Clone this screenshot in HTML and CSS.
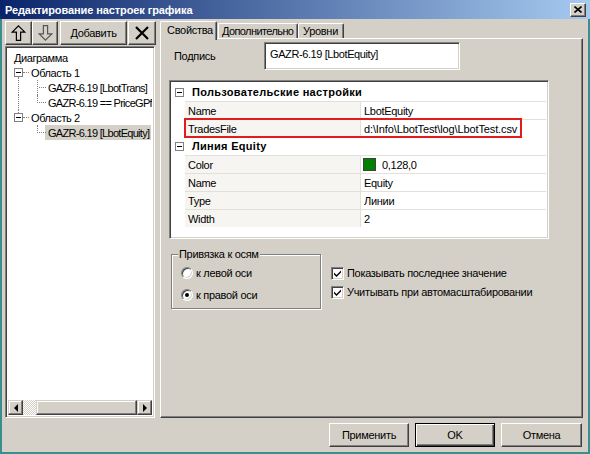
FILE: index.html
```html
<!DOCTYPE html>
<html lang="ru">
<head>
<meta charset="utf-8">
<title>Редактирование настроек графика</title>
<link rel="stylesheet" href="styles.css">
</head>
<body>
<div class="titlebar">
  <span class="title">Редактирование настроек графика</span>
  <button class="close" type="button"><svg width="8" height="7" viewBox="0 0 8 7"><path d="M0.5 0.5 L7.5 6.5 M7.5 0.5 L0.5 6.5" stroke="#000" stroke-width="1.6" fill="none"/></svg></button>
</div>
<div class="frame">
  <div class="main">
    <div class="left">
      <div class="toolbar">
        <button class="btn tb-up" type="button"><svg width="15" height="16" viewBox="0 0 15 16"><path d="M7.5 0.8 L13.8 7.2 L9.6 7.2 L9.6 15.3 L5.4 15.3 L5.4 7.2 L1.2 7.2 Z" fill="#d4d0c8" stroke="#000" stroke-width="1.2"/></svg></button>
        <button class="btn tb-down" type="button"><svg width="15" height="16" viewBox="0 0 15 16"><path d="M7.5 15.2 L13.8 8.8 L9.6 8.8 L9.6 0.7 L5.4 0.7 L5.4 8.8 L1.2 8.8 Z" fill="#d4d0c8" stroke="#555" stroke-width="1.2"/></svg></button>
        <button class="btn tb-add" type="button">Добавить</button>
        <button class="btn tb-del" type="button"><svg width="14" height="14" viewBox="0 0 14 14"><path d="M1 1 L13 13 M13 1 L1 13" stroke="#000" stroke-width="2.2" fill="none"/></svg></button>
      </div>
      <div class="tree sunken">
        <div class="tree-items">
          <div class="trow root"><span class="tt">Диаграмма</span></div>
          <div class="trow lvl1"><span class="pm has-next"></span><span class="dash"></span><span class="tt">Область 1</span></div>
          <div class="trow lvl2"><span class="vl on"></span><span class="conn"></span><span class="tt">GAZR-6.19 [LbotTrans]</span></div>
          <div class="trow lvl2"><span class="vl on"></span><span class="conn last"></span><span class="tt">GAZR-6.19 == PriceGPf</span></div>
          <div class="trow lvl1"><span class="pm has-prev"></span><span class="dash"></span><span class="tt">Область 2</span></div>
          <div class="trow lvl2"><span class="vl"></span><span class="conn last"></span><span class="tt sel">GAZR-6.19 [LbotEquity]</span></div>
        </div>
        <div class="hscroll">
          <span class="sb-btn"><i class="tri-left"></i></span>
          <span class="sb-track"></span>
          <span class="sb-thumb"></span>
          <span class="sb-btn"><i class="tri-right"></i></span>
        </div>
      </div>
    </div>
    <div class="tabs">
      <div class="tabstrip">
        <div class="tab active">Свойства</div>
        <div class="tab t2">Дополнительно</div>
        <div class="tab t3">Уровни</div>
      </div>
      <div class="panel">
        <div class="caption-row">
          <span class="lbl">Подпись</span>
          <div class="input sunken">GAZR-6.19 [LbotEquity]</div>
        </div>
        <div class="grid sunken">
          <div class="cat"><span class="gpm"></span><b>Пользовательские настройки</b></div>
          <div class="prop"><span class="pn">Name</span><span class="pv">LbotEquity</span></div>
          <div class="prop marked"><span class="pn">TradesFile</span><span class="pv path">d:\Info\LbotTest\log\LbotTest.csv</span><span class="mark"></span></div>
          <div class="cat"><span class="gpm"></span><b>Линия Equity</b></div>
          <div class="prop"><span class="pn">Color</span><span class="pv"><i class="swatch"></i>0,128,0</span></div>
          <div class="prop"><span class="pn">Name</span><span class="pv">Equity</span></div>
          <div class="prop"><span class="pn">Type</span><span class="pv">Линии</span></div>
          <div class="prop"><span class="pn">Width</span><span class="pv">2</span></div>
        </div>
        <div class="options">
          <fieldset class="group">
            <legend>Привязка к осям</legend>
            <label class="ropt"><span class="radio"></span>к левой оси</label>
            <label class="ropt"><span class="radio checked"></span>к правой оси</label>
          </fieldset>
          <div class="checks">
            <label class="copt"><span class="cbox"><svg width="9" height="9" viewBox="0 0 9 9"><path d="M1 3.5 L3.5 6 L8 1.5 L8 3.5 L3.5 8 L1 5.5 Z" fill="#000"/></svg></span>Показывать последнее значение</label>
            <label class="copt"><span class="cbox"><svg width="9" height="9" viewBox="0 0 9 9"><path d="M1 3.5 L3.5 6 L8 1.5 L8 3.5 L3.5 8 L1 5.5 Z" fill="#000"/></svg></span>Учитывать при автомасштабировании</label>
          </div>
        </div>
      </div>
    </div>
  </div>
  <div class="footer">
    <button class="btn fbtn" type="button">Применить</button>
    <button class="btn fbtn default" type="button">OK</button>
    <button class="btn fbtn" type="button">Отмена</button>
  </div>
</div>
</body>
</html>
```

FILE: styles.css
```css
* { box-sizing: border-box; }
html, body { margin: 0; padding: 0; }
body {
  width: 590px;
  height: 454px;
  overflow: hidden;
  background: #3a8e8e;
  font-family: "Liberation Sans", Arial, sans-serif;
  font-size: 11px;
  letter-spacing: -0.3px;
  color: #000;
  display: flex;
  flex-direction: column;
}

/* title bar */
.titlebar {
  height: 19px;
  flex: none;
  display: flex;
  align-items: center;
  padding: 0 4px 0 5px;
  background: linear-gradient(to right, #0a246a, #a6caf0);
  color: #fff;
  font-weight: bold;
  letter-spacing: -0.1px;
}
.close {
  margin-left: auto;
  width: 16px;
  height: 14px;
  padding: 0;
  display: flex;
  align-items: center;
  justify-content: center;
  background: #d4d0c8;
  border: 1px solid;
  border-color: #fff #404040 #404040 #fff;
  box-shadow: inset -1px -1px #808080;
}

/* window frame */
.frame {
  flex: 1;
  background: #d4d0c8;
  border: 2px solid #3a8e8e;
  border-top: 0;
  padding: 2px 5px 5px 3px;
  display: flex;
  flex-direction: column;
}
.main {
  height: 397px;
  display: flex;
  gap: 4px;
}

/* generic 3D */
.btn {
  font: inherit;
  letter-spacing: inherit;
  color: #000;
  background: #d4d0c8;
  border: 1px solid;
  border-color: #fff #404040 #404040 #fff;
  box-shadow: inset -1px -1px #808080, inset 1px 1px #d4d0c8;
  padding: 0;
  display: flex;
  align-items: center;
  justify-content: center;
}
.sunken {
  background: #fff;
  border: 1px solid;
  border-color: #808080 #fff #fff #808080;
  box-shadow: inset 1px 1px #404040, inset -1px -1px #d4d0c8;
}

/* left pane */
.left {
  width: 151px;
  display: flex;
  flex-direction: column;
  gap: 1px;
}
.toolbar {
  height: 24px;
  display: flex;
}
.tb-up { width: 27px; }
.tb-down { width: 26px; }
.tb-add { width: 67px; margin-left: 2px; }
.tb-del { width: 28px; margin-left: 1px; }

.tree {
  flex: 1;
  width: 150px;
  display: flex;
  flex-direction: column;
  padding: 2px;
  overflow: hidden;
}
.tree-items {
  flex: 1;
  padding-top: 1px;
  overflow: hidden;
  white-space: nowrap;
  letter-spacing: -0.4px;
}
.trow {
  height: 15px;
  display: flex;
  align-items: center;
}
.trow.root { padding-left: 6px; }
.trow.lvl1 { padding-left: 6px; }
.trow.lvl2 { padding-left: 10px; align-items: stretch; letter-spacing: -0.7px; }
.pm {
  position: relative;
  width: 9px;
  height: 9px;
  border: 1px solid #808080;
  background: #fff;
  flex: none;
}
.pm::before {
  content: "";
  position: absolute;
  left: 1px;
  top: 3px;
  width: 5px;
  height: 1px;
  background: #000;
}
.pm.has-next::after {
  content: "";
  position: absolute;
  left: 3px;
  top: 8px;
  height: 4px;
  border-left: 1px dotted #808080;
}
.pm.has-prev::after {
  content: "";
  position: absolute;
  left: 3px;
  top: -4px;
  height: 3px;
  border-left: 1px dotted #808080;
}
.dash {
  width: 6px;
  border-top: 1px dotted #808080;
  margin-right: 2px;
}
.vl { width: 19px; flex: none; }
.vl.on { border-left: 1px dotted #808080; }
.conn {
  position: relative;
  width: 8px;
  flex: none;
  border-left: 1px dotted #808080;
}
.conn.last { height: 8px; }
.conn::after {
  content: "";
  position: absolute;
  left: 1px;
  top: 7px;
  width: 7px;
  border-top: 1px dotted #808080;
}
.lvl2 .tt {
  display: flex;
  align-items: center;
  padding: 0 2px 0 3px;
}
.tt.sel { background: #d4d0c8; }

.hscroll {
  height: 15px;
  flex: none;
  display: flex;
}
.sb-btn {
  width: 15px;
  height: 15px;
  background: #d4d0c8;
  border: 1px solid;
  border-color: #d4d0c8 #404040 #404040 #d4d0c8;
  box-shadow: inset -1px -1px #808080, inset 1px 1px #fff;
  display: flex;
  align-items: center;
  justify-content: center;
}
.tri-left {
  width: 0; height: 0;
  border-top: 4px solid transparent;
  border-bottom: 4px solid transparent;
  border-right: 4px solid #000;
}
.tri-right {
  width: 0; height: 0;
  border-top: 4px solid transparent;
  border-bottom: 4px solid transparent;
  border-left: 4px solid #000;
}
.sb-track {
  width: 13px;
  background: conic-gradient(#fff 25%, #d4d0c8 0 50%, #fff 0 75%, #d4d0c8 0);
  background-size: 2px 2px;
}
.sb-thumb {
  flex: 1;
  background: #d4d0c8;
  border: 1px solid;
  border-color: #d4d0c8 #404040 #404040 #d4d0c8;
  box-shadow: inset -1px -1px #808080, inset 1px 1px #fff;
}

/* tabs */
.tabs {
  flex: 1;
  display: flex;
  flex-direction: column;
}
.tabstrip {
  height: 17px;
  display: flex;
  align-items: flex-end;
  position: relative;
  z-index: 1;
}
.tab {
  height: 15px;
  background: #d4d0c8;
  border: 1px solid;
  border-bottom: 0;
  border-color: #fff #404040 #404040 #fff;
  border-radius: 2px 2px 0 0;
  box-shadow: inset -1px 0 #808080;
  display: flex;
  align-items: center;
  white-space: nowrap;
  overflow: hidden;
}
.tab.active {
  width: 57px;
  height: 19px;
  margin-bottom: -2px;
  padding-left: 6px;
  padding-bottom: 2px;
}
.tab.t2 { width: 80px; margin-left: 1px; padding-left: 3px; letter-spacing: -0.6px; }
.tab.t3 { width: 46px; padding-left: 4px; }

.panel {
  flex: 1;
  border: 1px solid;
  border-color: #fff #404040 #404040 #fff;
  box-shadow: inset -1px -1px #808080;
  padding: 3px 0 0 8px;
  display: flex;
  flex-direction: column;
}
.caption-row {
  display: flex;
  height: 28px;
}
.lbl {
  width: 95px;
  padding-left: 5px;
  padding-top: 8px;
}
.input {
  width: 196px;
  height: 28px;
  padding: 5px 0 0 5px;
  letter-spacing: -0.4px;
}

/* property grid */
.grid {
  margin-top: 10px;
  width: 380px;
  height: 159px;
  padding: 2px;
  flex: none;
}
.cat {
  height: 18px;
  display: flex;
  align-items: center;
  padding-left: 3px;
  font-weight: bold;
}
.cat b { margin-left: 8px; letter-spacing: 0.3px; }
.gpm {
  position: relative;
  width: 9px;
  height: 9px;
  border: 1px solid #808080;
  flex: none;
}
.gpm::before {
  content: "";
  position: absolute;
  left: 1px;
  top: 3px;
  width: 5px;
  height: 1px;
  background: #000;
}
.prop {
  position: relative;
  height: 18px;
  margin-left: 13px;
  display: grid;
  grid-template-columns: 176px 1fr;
  border-top: 1px solid #e2e0da;
}
.pn {
  padding-left: 3px;
  display: flex;
  align-items: center;
  border-right: 1px solid #e2e0da;
  background: #f6f5f2;
}
.pv {
  padding-left: 3px;
  display: flex;
  align-items: center;
  white-space: nowrap;
}
.pv.path { letter-spacing: -0.12px; }
.swatch {
  width: 13px;
  height: 13px;
  margin-left: -1px;
  margin-right: 6px;
  background: #008000;
  border: 1px solid #404040;
}
.mark {
  position: absolute;
  left: -1px;
  top: -2px;
  width: 338px;
  height: 20px;
  border: 2px solid #e31b1b;
}

/* options */
.options {
  display: flex;
  margin-top: 9px;
}
.group {
  margin: 0 0 0 2px;
  width: 150px;
  height: 61px;
  padding: 0 0 0 6px;
  border: 1px solid #808080;
  box-shadow: 1px 1px 0 #fff, inset 1px 1px 0 #fff;
  display: flex;
  flex-direction: column;
}
.group legend {
  padding: 0 1px;
  margin: 0;
  line-height: 13px;
  background: #d4d0c8;
}
.ropt {
  height: 16px;
  display: flex;
  align-items: center;
  margin-left: 3px;
}
.ropt:first-of-type { margin-top: 4px; }
.ropt + .ropt { margin-top: 6px; }
.radio {
  position: relative;
  width: 12px;
  height: 12px;
  border-radius: 50%;
  background: #fff;
  border: 1px solid;
  border-color: #808080 #fff #fff #808080;
  box-shadow: inset 1px 1px #404040, inset -1px -1px #d4d0c8;
  margin-right: 3px;
}
.radio.checked::after {
  content: "";
  position: absolute;
  left: 3px;
  top: 3px;
  width: 4px;
  height: 4px;
  border-radius: 50%;
  background: #000;
}
.checks {
  margin-left: 10px;
  padding-top: 17px;
  display: flex;
  flex-direction: column;
  gap: 3px;
}
.copt {
  height: 16px;
  display: flex;
  align-items: center;
}
.cbox {
  width: 13px;
  height: 13px;
  margin-right: 3px;
  background: #fff;
  border: 1px solid;
  border-color: #808080 #fff #fff #808080;
  box-shadow: inset 1px 1px #404040, inset -1px -1px #d4d0c8;
  display: flex;
  align-items: center;
  justify-content: center;
}

/* footer */
.footer {
  margin-top: 5px;
  height: 24px;
  display: flex;
  justify-content: flex-end;
  gap: 6px;
  padding-right: 1px;
}
.fbtn { width: 80px; height: 24px; }
.fbtn.default {
  border: 1px solid #000;
  box-shadow: inset 1px 1px #fff, inset -1px -1px #404040, inset -2px -2px #808080;
}
.fbtn:last-child { width: 81px; }
```
